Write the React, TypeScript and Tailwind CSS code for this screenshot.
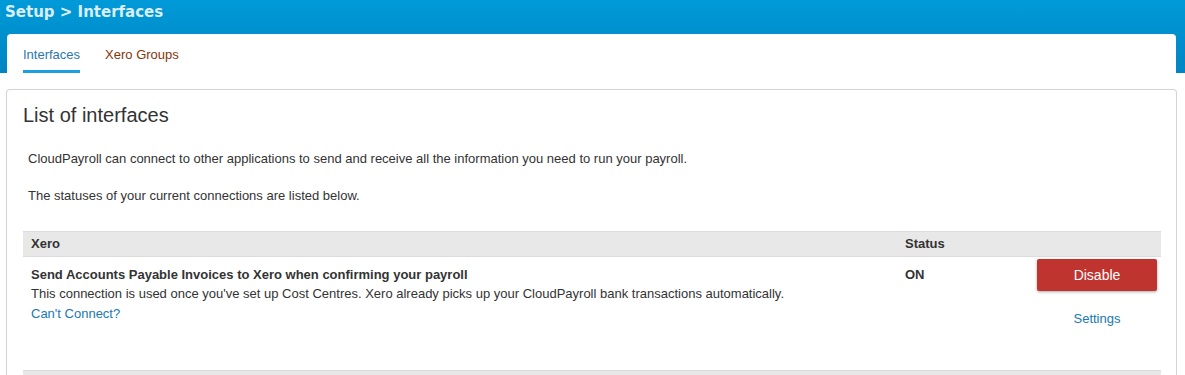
import React from "react";

export default function App() {
  return (
    <div className="w-[1185px] min-h-[375px] bg-white font-['Liberation_Sans',Arial,sans-serif] text-[#333]">
      <div className="bg-[linear-gradient(to_bottom,#009ad8,#0085c2)] bg-no-repeat bg-[length:100%_73px]">
        <div className="h-[34px] pl-[5px] pt-[2px] font-['DejaVu_Sans',Verdana,sans-serif] font-bold text-[15px] leading-[20px] text-[#d9eef9]">
          Setup &gt; Interfaces
        </div>
        <div className="ml-[7px] mr-[9px] bg-white rounded-t-[4px] h-[39px] flex pl-[16px] gap-[25px]">
          <div className="flex flex-col">
            <div className="pt-[13px] text-[13px] leading-[15px] text-[#2b78ad]">Interfaces</div>
            <div className="mt-[8px] h-[3px] bg-[#1aa0e0]" />
          </div>
          <div className="flex flex-col">
            <div className="pt-[13px] text-[13px] leading-[15px] text-[#86330a]">Xero Groups</div>
          </div>
        </div>
      </div>
      <div className="mt-[16px] ml-[6px] mr-[8px] border border-b-0 border-[#d4d4d4] rounded-t-[4px] px-[16px] pt-[13px] h-[286px]">
        <h2 className="text-[20px] leading-[24px] text-[#333]">List of interfaces</h2>
        <p className="mt-[23px] ml-[5px] text-[13px] leading-[17px]">
          CloudPayroll can connect to other applications to send and receive all the information you need to run your payroll.
        </p>
        <p className="mt-[20px] ml-[5px] text-[13px] leading-[17px]">
          The statuses of your current connections are listed below.
        </p>
        <div className="mt-[27px] w-[1138px] text-[13px]">
          <div className="flex h-[26px] items-center bg-[#e8e8e8] border-t border-b border-[#dcdcdc] font-bold text-[#333]">
            <div className="w-[874px] pl-[8px]">Xero</div>
            <div className="pl-[8px]">Status</div>
          </div>
          <div className="flex h-[113px]">
            <div className="w-[874px] pl-[8px] pt-[8px] leading-[20px]">
              <div className="font-bold">Send Accounts Payable Invoices to Xero when confirming your payroll</div>
              <div className="-mt-[1px]">This connection is used once you&apos;ve set up Cost Centres. Xero already picks up your CloudPayroll bank transactions automatically.</div>
              <div className="text-[#2079b0]">Can&apos;t Connect?</div>
            </div>
            <div className="w-[140px] pl-[8px] pt-[8px] leading-[20px] font-bold">ON</div>
            <div className="flex flex-col items-center pt-[2px] w-[120px]">
              <div className="w-[120px] h-[32px] bg-[#c0342f] rounded-[2px] shadow-[0_1px_3px_rgba(0,0,0,0.35)] text-white text-[14px] flex items-center justify-center">
                Disable
              </div>
              <div className="mt-[20px] text-[13px] leading-[16px] text-[#2079b0]">Settings</div>
            </div>
          </div>
          <div className="h-[20px] bg-[#e8e8e8] border-t border-[#dcdcdc]" />
        </div>
      </div>
    </div>
  );
}
